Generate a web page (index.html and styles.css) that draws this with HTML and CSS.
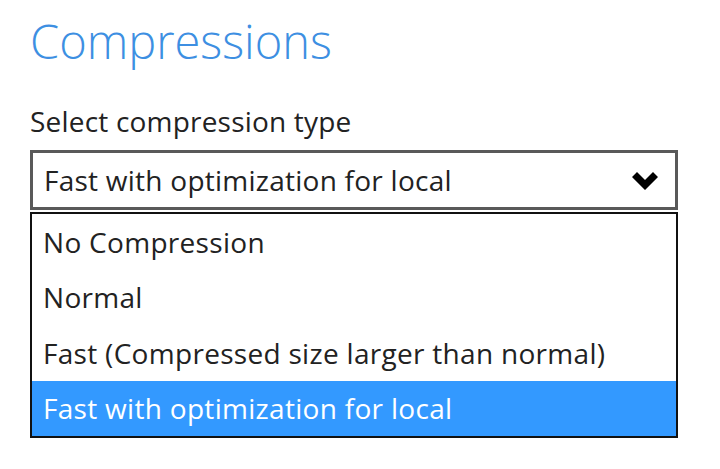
FILE: index.html
```html
<!DOCTYPE html>
<html lang="en">
<head>
<meta charset="utf-8">
<title>Compressions</title>
<link rel="stylesheet" href="styles.css">
</head>
<body>
<div class="page">
  <h1 class="title">Compressions</h1>
  <div class="label">Select compression type</div>
  <div class="select">
    <span class="select-value">Fast with optimization for local</span>
    <svg class="chevron" width="26" height="18" viewBox="0 0 26 18" aria-hidden="true">
      <polygon points="0,5 5,0 13,8 21,0 26,5 13,18" fill="#000"/>
    </svg>
  </div>
  <ul class="options">
    <li class="option">No Compression</li>
    <li class="option">Normal</li>
    <li class="option">Fast (Compressed size larger than normal)</li>
    <li class="option selected">Fast with optimization for local</li>
  </ul>
</div>
</body>
</html>
```
FILE: styles.css
```css
html, body {
  margin: 0;
  padding: 0;
  background: #ffffff;
}
.page {
  padding-left: 30px;
  font-family: "Open Sans", "Noto Sans", sans-serif;
  color: #222222;
}
.title {
  margin: 13px 0 0 0;
  font-size: 47px;
  font-weight: 300;
  line-height: 56px;
  color: #3d8fe2;
}
.label {
  margin-top: 37px;
  font-size: 28px;
  line-height: 30px;
  letter-spacing: 0.2px;
}
.select {
  margin-top: 14px;
  box-sizing: border-box;
  width: 648px;
  height: 60px;
  border: 3px solid #595959;
  display: flex;
  align-items: center;
  justify-content: space-between;
  padding: 0 17px 0 11px;
  font-size: 28px;
  letter-spacing: 0.25px;
}
.chevron {
  display: block;
  margin-top: 1px;
}
.options {
  list-style: none;
  margin: 2px 0 0 0;
  padding: 0;
  box-sizing: border-box;
  width: 648px;
  border: 2px solid #111111;
  font-size: 28px;
  letter-spacing: 0.3px;
}
.option {
  height: 55.5px;
  display: flex;
  align-items: center;
  padding-left: 11px;
}
.option.selected {
  background: #3399ff;
  color: #ffffff;
}
```
